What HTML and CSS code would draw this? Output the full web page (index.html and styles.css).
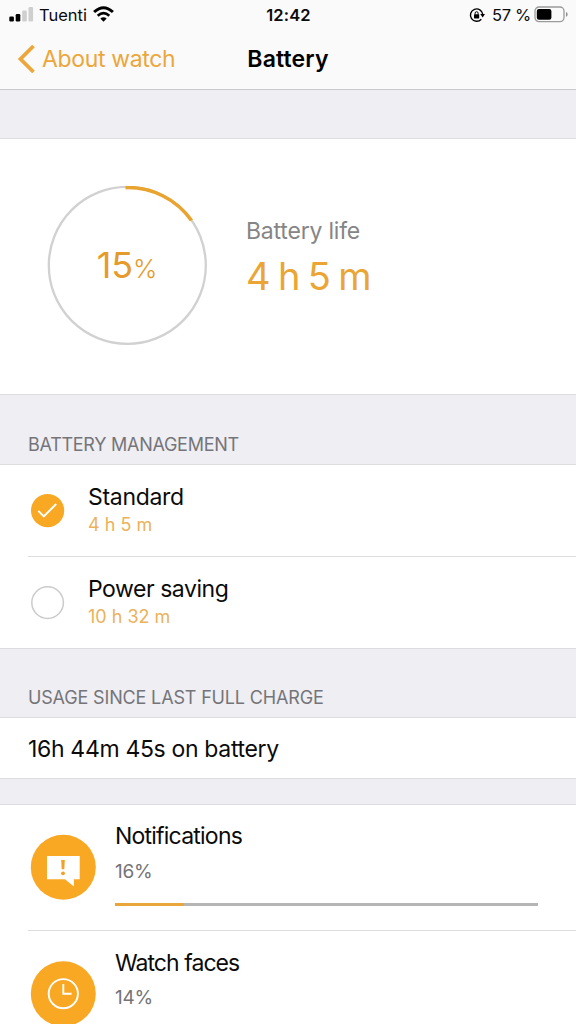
FILE: index.html
```html
<!DOCTYPE html>
<html lang="en">
<head>
<meta charset="utf-8">
<title>Battery</title>
<link rel="stylesheet" href="styles.css">
</head>
<body>
<div class="screen">
  <header class="top">
    <div class="status">
      <div class="status-left">
        <svg class="signal" width="25" height="16" viewBox="0 0 25 16">
          <rect x="0.3" y="10.5" width="4.6" height="5" rx="1.2" fill="#000"/>
          <rect x="6.7" y="8" width="4.6" height="7.5" rx="1.2" fill="#000"/>
          <rect x="13.2" y="4.5" width="4.6" height="11" rx="1.2" fill="#cfcfcf"/>
          <rect x="19.5" y="1" width="4.6" height="14.5" rx="1.2" fill="#cfcfcf"/>
        </svg>
        <span class="carrier">Tuenti</span>
        <svg class="wifi" width="21" height="16" viewBox="0 0 21 16">
          <path d="M1.1 6Q10.5 -2.6 19.9 6" fill="none" stroke="#000" stroke-width="3"/>
          <path d="M4.7 9.7Q10.5 4.5 16.3 9.7" fill="none" stroke="#000" stroke-width="2.7"/>
          <path d="M7.3 12.6Q10.5 9.8 13.7 12.6L10.5 15.8Z" fill="#000"/>
        </svg>
      </div>
      <span class="clock">12:42</span>
      <div class="status-right">
        <svg class="lock" width="16" height="16" viewBox="0 0 16 16">
          <path d="M12.3 12.2A6.2 6.2 0 1 1 13.8 7.4" fill="none" stroke="#000" stroke-width="1.4"/>
          <path d="M11.2 7H16L13.7 10.4Z" fill="#000"/>
          <rect x="5" y="7.2" width="5.2" height="4.2" rx=".6" fill="#000"/>
          <path d="M6.1 7.5V6.2a1.5 1.5 0 0 1 3 0V7.5" fill="none" stroke="#000" stroke-width="1"/>
        </svg>
        <span class="percent">57 %</span>
        <svg class="cell" width="34" height="17" viewBox="0 0 34 17">
          <rect x="1" y="1" width="29" height="14.6" rx="4" fill="none" stroke="#9b9b9b" stroke-width="1.3"/>
          <rect x="2.8" y="2.9" width="14.6" height="10.8" rx="2.2" fill="#000"/>
          <path d="M32 6q1.6.5 1.6 2.4T32 10.8Z" fill="#8d8d8d"/>
        </svg>
      </div>
    </div>
    <nav class="nav">
      <a class="back">
        <svg width="18" height="30" viewBox="0 0 18 30"><path d="M16.5 2L3.5 15L16.5 28" fill="none" stroke="#eca63a" stroke-width="3.8"/></svg>
        <span class="back-label">About watch</span>
      </a>
      <h1 class="title">Battery</h1>
    </nav>
  </header>

  <section class="summary">
    <div class="ring">
      <svg width="160" height="160" viewBox="0 0 160 160">
        <circle cx="80.3" cy="79.4" r="78.5" fill="none" stroke="#d1d1d1" stroke-width="2.3"/>
        <path d="M78.5 1.6A78 78 0 0 1 144.5 34.5" fill="none" stroke="#e9a430" stroke-width="3.6"/>
      </svg>
      <div class="ring-value">15<span class="ring-unit">%</span></div>
    </div>
    <div class="life">
      <div class="life-label">Battery life</div>
      <div class="life-value">4 h 5 m</div>
    </div>
  </section>

  <h2 class="heading">BATTERY MANAGEMENT</h2>
  <section class="group">
    <div class="mode">
      <svg width="34" height="34" viewBox="0 0 34 34"><circle cx="16.6" cy="16.6" r="16.6" fill="#f8a823"/><path d="M7.3 16.9L12.8 22.4L25.2 10" fill="none" stroke="#fff" stroke-width="2"/></svg>
      <div>
        <div class="name standard">Standard</div>
        <div class="duration">4 h 5 m</div>
      </div>
    </div>
    <div class="mode">
      <svg width="34" height="34" viewBox="0 0 34 34"><circle cx="16.6" cy="16.6" r="15.8" fill="#fff" stroke="#cbcbcb" stroke-width="1.5"/></svg>
      <div>
        <div class="name saving">Power saving</div>
        <div class="duration">10 h 32 m</div>
      </div>
    </div>
  </section>

  <h2 class="heading usage">USAGE SINCE LAST FULL CHARGE</h2>
  <section class="group total">16h 44m 45s on battery</section>

  <section class="group apps">
    <div class="app">
      <svg class="app-icon" width="66" height="66" viewBox="0 0 66 66">
        <circle cx="33.3" cy="33.3" r="32.5" fill="#f8a823"/>
        <path d="M17 22h32.7v23.200H43.9v7.3L35 45.200H17Z" fill="#fff"/>
        <path d="M31.2 26h3.6l-.5 9.2h-2.6Z" fill="#f0a12a"/>
        <circle cx="33" cy="39.3" r="1.9" fill="#f0a12a"/>
      </svg>
      <div class="app-body">
        <div class="name notifications">Notifications</div>
        <div class="share">16%</div>
        <div class="bar"><div class="bar-fill" style="width:16.2%"></div></div>
      </div>
    </div>
    <div class="app">
      <svg class="app-icon" width="66" height="66" viewBox="0 0 66 66">
        <circle cx="33.3" cy="33.7" r="32.5" fill="#f8a823"/>
        <circle cx="33.3" cy="33.7" r="14.6" fill="none" stroke="#fff" stroke-width="1.9"/>
        <path d="M33.3 24v9.8h8.3" fill="none" stroke="#fff" stroke-width="1.9"/>
      </svg>
      <div class="app-body">
        <div class="name faces">Watch faces</div>
        <div class="share">14%</div>
        <div class="bar"><div class="bar-fill" style="width:14%"></div></div>
      </div>
    </div>
  </section>
</div>
</body>
</html>
```
FILE: styles.css
```css
* { box-sizing: border-box; }
body { margin: 0; }
svg { display: block; flex: none; }
.screen {
  width: 576px;
  height: 1024px;
  overflow: hidden;
  background: #efeef3;
  color: #0b0b0b;
  font-family: Inter, "Liberation Sans", sans-serif;
  white-space: nowrap;
}
.top { height: 90px; background: #fafafa; border-bottom: 1px solid #c9c9cc; }
.status {
  height: 30px;
  display: grid;
  grid-template-columns: 1fr auto 1fr;
  align-items: center;
  padding: 0 8px 0 9px;
  font-size: 16.5px;
}
.status-left, .status-right { display: flex; align-items: center; }
.status-right { justify-content: flex-end; }
.carrier { margin: 0 6px 0 5px; }
.signal { margin-top: -2px; }
.wifi { margin-top: -2px; }
.clock { font-weight: 600; letter-spacing: .15px; }
.lock { margin-right: 7px; }
.percent { margin-right: 3px; letter-spacing: -.3px; }
.cell { margin-top: -2px; }
.nav {
  height: 57px;
  display: grid;
  grid-template-columns: 1fr auto 1fr;
  align-items: center;
  padding-left: 17px;
  padding-right: 17px;
}
.back { display: flex; align-items: center; gap: 7px; color: #eca63a; }
.back-label { font-size: 23px; letter-spacing: -.35px; }
.title { margin: 0; font-size: 23px; font-weight: 600; letter-spacing: .15px; color: #000; }
.summary {
  height: 257px;
  margin-top: 48px;
  background: #fff;
  border-top: 1px solid #dddde1;
  border-bottom: 1px solid #dddde1;
  display: flex;
  align-items: center;
  gap: 39px;
  padding: 0 0 2px 47px;
}
.ring { display: grid; place-items: center; }
.ring > * { grid-area: 1 / 1; }
.ring-value { padding-bottom: 2px; font-size: 36px; color: #e59b2b; letter-spacing: -.1px; }
.ring-unit { font-size: 26px; font-weight: 300; }
.life { margin-top: -16px; }
.life-label { font-size: 23px; line-height: 32px; color: #858585; letter-spacing: -.2px; }
.life-value { margin-top: 5px; font-size: 38px; line-height: 48px; color: #eaa535; letter-spacing: -.9px; word-spacing: -1.5px; }
.heading {
  margin: 0;
  height: 69px;
  padding: 36px 0 0 28px;
  font-size: 18px;
  font-weight: 400;
  line-height: 28px;
  color: #757579;
  letter-spacing: -.27px;
}
.group { background: #fff; border-top: 1px solid #dddde1; border-bottom: 1px solid #dddde1; }
.mode {
  height: 91px;
  margin-left: 28px;
  display: flex;
  gap: 23px;
  padding: 18px 0 0 3px;
}
.mode svg { margin-top: 11px; }
.mode + .mode { height: 92px; }
.mode + .mode, .app + .app { border-top: 1px solid #dddde1; }
.name { font-size: 23px; line-height: 28px; letter-spacing: -.3px; }
.saving { letter-spacing: -.45px; }
.notifications { letter-spacing: -.78px; }
.faces { letter-spacing: -.95px; padding-top: 1px; margin-bottom: -1px; }
.duration { font-size: 18px; line-height: 28px; color: #eab25a; }
.usage { height: 68px; padding-top: 35px; letter-spacing: -.16px; }
.total { height: 62px; padding-left: 28px; font-size: 23px; line-height: 62px; letter-spacing: -.33px; }
.apps { margin-top: 25px; }
.app { height: 125px; margin-left: 28px; padding: 16px 38px 0 2px; display: flex; gap: 19px; }
.app-icon { margin-top: 13px; }
.app-body { flex: 1; padding-top: 1px; }
.share { margin-top: 9px; font-size: 19px; line-height: 26px; color: #747474; letter-spacing: -.3px; }
.bar { height: 3px; margin-top: 18px; background: #b5b5b5; }
.bar-fill { height: 3px; background: #e9a63b; }
```
